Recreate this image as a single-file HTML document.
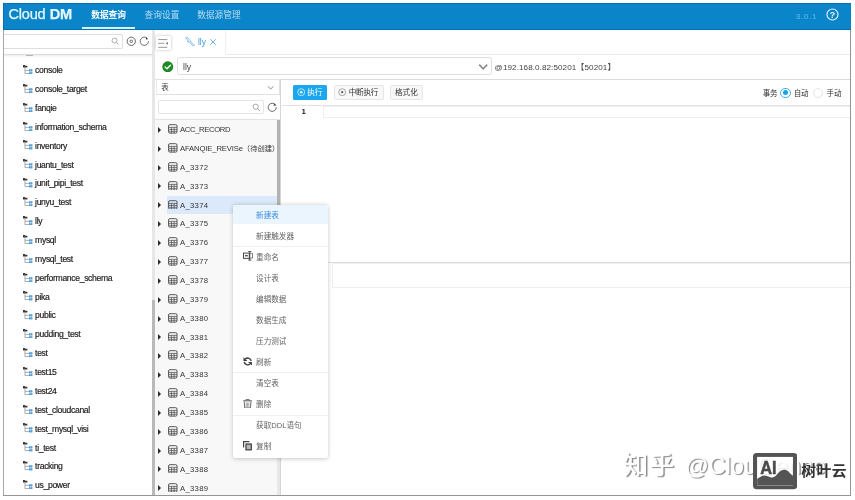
<!DOCTYPE html>
<html lang="zh-CN">
<head>
<meta charset="utf-8">
<title>Cloud DM</title>
<style>
*{box-sizing:border-box;margin:0;padding:0}
html,body{width:855px;height:500px;overflow:hidden;background:#fff}
body{font-family:"Liberation Sans","Noto Sans CJK SC",sans-serif;color:#333;font-size:9px;position:relative}
.abs{position:absolute}
#frame{position:absolute;left:3px;top:2px;width:848px;height:494px;background:#fff;overflow:hidden;will-change:transform}
.fb{position:absolute;background:#959595}
#hdr{position:absolute;left:0.200px;top:0.700px;width:847.800px;height:27.100px;background:#0b85c9;box-shadow:inset 1px 1px 0 rgba(0,40,80,.25),inset 0 -1px 0 rgba(0,40,80,.22)}
#logo{position:absolute;left:5.400px;top:3.600px;color:#e4f8ff;-webkit-text-stroke:0.250px #e4f8ff;font-size:14.6px;line-height:16px;letter-spacing:-0.25px;white-space:nowrap}
#logo b{font-weight:bold;margin-left:4.2px;letter-spacing:-0.3px}
.nav{position:absolute;top:5.900px;color:#b9def4;font-size:8.7px;line-height:12px;white-space:nowrap}
.nav.on{color:#fff;font-weight:bold}
#navline{position:absolute;left:78.800px;top:24.600px;width:53px;height:2.200px;background:#d9f1fb}
#ver{position:absolute;left:792.800px;top:9.500px;color:#4ab3ee;-webkit-text-stroke:0.200px #4ab3ee;font-size:7.800px;letter-spacing:0.800px;line-height:10px}
#help{position:absolute;left:822.800px;top:4.900px;width:13px;height:13px}
/* left panel */
#lsearch{position:absolute;left:-2px;top:32.2px;width:122px;height:14.8px;border:1px solid #dcdee2;border-radius:2px;background:#fff}
#lshadow{position:absolute;left:0;top:51.6px;width:149px;height:1px;background:#dcdcdc;box-shadow:0 1px 2px rgba(0,0,0,.12)}
.dbrow{position:absolute;left:0;height:18px;line-height:18px;width:149px;white-space:nowrap;font-size:8.600px;letter-spacing:-0.330px;color:#222;-webkit-text-stroke:0.180px #222}
.dbrow .dbi{position:absolute;left:20.400px;top:3.400px}
.dbrow span{position:absolute;left:32.100px;top:-0.400px}
#ldiv{position:absolute;left:149px;top:27.600px;width:3.400px;height:470px;background:#e7e7e7}
#lthumb{position:absolute;left:149px;top:298px;width:3.400px;height:200px;background:#b9b9b9}
/* tabs */
#tabsline{position:absolute;left:223px;top:51.800px;width:700px;height:1px;background:#ebebeb}
#toggle{position:absolute;left:153.4px;top:34px;width:14.6px;height:14.2px;background:#fff;box-shadow:0 0 3px rgba(0,0,0,.28);border-radius:1px}
#tab{position:absolute;left:172px;top:27.600px;width:51px;height:24.400px;border-right:1px solid #eee;background:#fff}
#tab span{position:absolute;left:23px;top:6.6px;font-size:8.4px;line-height:12px;color:#3d9bdc}
/* row2 */
#ok{position:absolute;left:159.400px;top:58.800px;width:11.500px;height:11.500px}
#sel{position:absolute;left:174.400px;top:55.300px;width:314.600px;height:17.900px;border:1px solid #dcdee2;border-radius:2.5px;background:#fff}
#sel span{position:absolute;left:4.600px;top:2.500px;font-size:8.6px;line-height:12px;color:#444}
#host{position:absolute;left:491.600px;top:59.500px;font-size:8.100px;line-height:12px;color:#444;white-space:nowrap;letter-spacing:0.08px}
#row2line{position:absolute;left:152px;top:76.8px;width:700px;height:1px;background:#dcdcdc}
/* table panel */
#tsel{position:absolute;left:152.600px;top:77.300px;width:124.800px;height:15.300px;border:1px solid #e2e2e2;border-left-color:#ececec;background:#fff}
#tsel span{position:absolute;left:4.600px;top:1.900px;font-size:7.500px;line-height:12px;color:#444}
#tsearch{position:absolute;left:154.900px;top:97.500px;width:106px;height:14.800px;border:1px solid #e4e5e8;border-radius:2px;background:#fff}
#tline{position:absolute;left:152px;top:117px;width:125px;height:1px;background:#e2e2e2}
.tbrow{position:absolute;left:152px;width:122px;height:18.8px;line-height:18.8px;white-space:nowrap;font-size:7.700px;letter-spacing:.300px;color:#333}
.tbrow.sel{background:#dbe9fb;left:164px;width:110px}
.tbrow.sel .arr{left:-8.8px}.tbrow.sel .tbi{left:1.2px}.tbrow.sel span{left:13px}
.tbrow .arr{position:absolute;left:3.2px;top:6.700px;width:0;height:0;border-left:3.800px solid #2a2a2a;border-top:3.100px solid transparent;border-bottom:3.100px solid transparent}
.tbrow .tbi{position:absolute;left:13.200px;top:3.900px}
.tbrow span{position:absolute;left:25px;top:0.900px}
.tbrow em{font-style:normal;font-size:7.300px;letter-spacing:0}
#tdiv{position:absolute;left:273.6px;top:117px;width:3.4px;height:380px;background:#e8e8e8}
#tthumb{position:absolute;left:274.200px;top:117.800px;width:3px;height:190px;background:#b2b2b2}
#tdiv2{position:absolute;left:277.200px;top:77.800px;width:1px;height:420px;background:#d6d6d6}
/* editor */
#run{position:absolute;left:289.500px;top:83px;width:34.600px;height:14.500px;background:#1ba7ef;border-radius:1.500px;color:#fff;font-size:7.600px;line-height:14.500px}
.btn{position:absolute;top:83px;height:14.500px;border:1px solid #e6e6e8;border-radius:1.5px;background:#f8f8f9;color:#333;font-size:7.600px;line-height:12.700px;white-space:nowrap}
#edline{position:absolute;left:278.6px;top:103px;width:572px;height:1px;background:#e2e2e2}
#gutter{position:absolute;left:278.6px;top:104px;width:41px;height:157px;background:#fff}
#ln{position:absolute;left:296.600px;top:104.200px;width:8px;text-align:center;font-weight:bold;font-size:7.800px;line-height:12px;color:#222}
#actline{position:absolute;left:319.800px;top:103.600px;width:532px;height:12.800px;border:1px solid #efefef}
#split{position:absolute;left:278.600px;top:259.600px;width:572px;height:1.200px;background:#dedede}
#resbox{position:absolute;left:329px;top:260.600px;width:523px;height:25px;border:1px solid #efefef}
.rad{position:absolute;top:85.600px;width:10.400px;height:10.400px;border-radius:50%;border:1px solid #e4e5e8;background:#fff}
.rad.on{border-color:#45b2ef}
.rad.on::after{content:"";position:absolute;left:1.500px;top:1.500px;width:5.400px;height:5.400px;border-radius:50%;background:#1ba3e8}
.rtxt{position:absolute;top:85.600px;font-size:7.500px;line-height:12px;color:#333;white-space:nowrap;letter-spacing:-0.2px}
/* menu */
#menu{position:absolute;left:229.900px;top:202.600px;width:95px;height:253.400px;background:#fff;border-radius:2.5px;box-shadow:0 0.5px 4px rgba(0,0,0,.22)}
#menu .it{position:absolute;left:0;width:95px;height:20.600px;line-height:20.600px;font-size:7.600px;color:#636363;padding-left:23.200px;white-space:nowrap}
#menu .it.hl{color:#3a8ee0}
#menu .hlbg{position:absolute;left:0;top:0;width:95px;height:19.800px;background:#ebf5fe;border-radius:2.500px 2.500px 0 0}
#menu .dv{position:absolute;left:0;width:95px;height:1px;background:#f0f0f0}
#menu svg{position:absolute}
/* watermark */
#wm{position:absolute;left:620.600px;top:448.600px;font-size:24.600px;font-weight:500;letter-spacing:1.400px;line-height:30px;color:#fff;white-space:nowrap;text-shadow:1.400px 1.400px 0.900px rgba(0,0,0,.46)}
#wm i{font-style:normal;font-weight:400;font-size:23.200px;letter-spacing:0.100px;margin-left:9.600px}
#ai{position:absolute;left:750px;top:451.400px;width:44.400px;height:36.200px}
#syy{position:absolute;left:798.200px;top:458.400px;font-size:14.800px;line-height:22px;color:#333;font-weight:bold;white-space:nowrap;letter-spacing:0.500px}
</style>
</head>
<body>
<div id="frame">
  <div id="hdr">
    <div id="logo">Cloud<b>DM</b></div>
    <div class="nav on" style="left:88px">数据查询</div>
    <div class="nav" style="left:141.4px">查询设置</div>
    <div class="nav" style="left:194px">数据源管理</div>
    <div id="navline"></div>
    <div id="ver">3.0.1</div>
    <svg id="help" viewBox="0 0 25 25"><circle cx="12.5" cy="12.5" r="10.6" fill="none" stroke="#eaf6fd" stroke-width="2.2"/><text x="12.5" y="18.4" text-anchor="middle" font-family="Liberation Sans, sans-serif" font-weight="bold" font-size="17" fill="#eaf6fd">?</text></svg>
  </div>

  <!-- left panel -->
  <div id="lsearch"></div>
  <svg class="abs" style="left:108.2px;top:35.2px" width="8.6" height="8.6" viewBox="0 0 18 18"><circle cx="7.4" cy="7.4" r="5.2" fill="none" stroke="#8d8d8d" stroke-width="1.5"/><path d="M11.4 11.4l4.6 4.6" stroke="#8d8d8d" stroke-width="1.6"/></svg>
  <svg class="abs" style="left:122.8px;top:34.3px" width="10.6" height="10.6" viewBox="0 0 22 22"><circle cx="11" cy="11" r="8.6" fill="none" stroke="#3a3a3a" stroke-width="1.6"/><circle cx="11" cy="11" r="2.6" fill="none" stroke="#3a3a3a" stroke-width="1.5"/></svg>
  <svg class="abs" style="left:136.200px;top:34.300px" width="10.600" height="10.600" viewBox="0 0 22 22"><path d="M17.600 5.400A8.600 8.600 0 1 0 19.600 11" fill="none" stroke="#3a3a3a" stroke-width="1.500"/><path d="M15 2.600l3.600 4-4.600 0.800z" fill="#3a3a3a"/></svg>
  <div id="lshadow"></div>
  <div class="abs" style="left:22.600px;top:52.500px;width:7.400px;height:1.300px;background:#777;opacity:.500"></div>
<div class="dbrow" style="top:59.60px"><svg class="dbi" viewBox="0 0 18 18" width="9.400" height="9.400"><path d="M0 0h3.400l1 1.200h4v3.800H0z" fill="#3a3a3a"/><path d="M3.800 5v11.400h8M3.800 10.200h8" fill="none" stroke="#7d8790" stroke-width="1.300"/><rect x="11.600" y="8.200" width="6.400" height="4.200" fill="#3f8fd0"/><rect x="11.600" y="13.800" width="6.400" height="4.200" fill="#3f8fd0"/><path d="M14.800 8.200v4.200M14.800 13.800v4.200" stroke="#d6e9f8" stroke-width="0.900"/></svg><span>console</span></div>
<div class="dbrow" style="top:78.46px"><svg class="dbi" viewBox="0 0 18 18" width="9.400" height="9.400"><path d="M0 0h3.400l1 1.200h4v3.800H0z" fill="#3a3a3a"/><path d="M3.800 5v11.400h8M3.800 10.200h8" fill="none" stroke="#7d8790" stroke-width="1.300"/><rect x="11.600" y="8.200" width="6.400" height="4.200" fill="#3f8fd0"/><rect x="11.600" y="13.800" width="6.400" height="4.200" fill="#3f8fd0"/><path d="M14.800 8.200v4.200M14.800 13.800v4.200" stroke="#d6e9f8" stroke-width="0.900"/></svg><span>console_target</span></div>
<div class="dbrow" style="top:97.33px"><svg class="dbi" viewBox="0 0 18 18" width="9.400" height="9.400"><path d="M0 0h3.400l1 1.200h4v3.800H0z" fill="#3a3a3a"/><path d="M3.800 5v11.400h8M3.800 10.200h8" fill="none" stroke="#7d8790" stroke-width="1.300"/><rect x="11.600" y="8.200" width="6.400" height="4.200" fill="#3f8fd0"/><rect x="11.600" y="13.800" width="6.400" height="4.200" fill="#3f8fd0"/><path d="M14.800 8.200v4.200M14.800 13.800v4.200" stroke="#d6e9f8" stroke-width="0.900"/></svg><span>fanqie</span></div>
<div class="dbrow" style="top:116.19px"><svg class="dbi" viewBox="0 0 18 18" width="9.400" height="9.400"><path d="M0 0h3.400l1 1.200h4v3.800H0z" fill="#3a3a3a"/><path d="M3.800 5v11.400h8M3.800 10.200h8" fill="none" stroke="#7d8790" stroke-width="1.300"/><rect x="11.600" y="8.200" width="6.400" height="4.200" fill="#3f8fd0"/><rect x="11.600" y="13.800" width="6.400" height="4.200" fill="#3f8fd0"/><path d="M14.800 8.200v4.200M14.800 13.800v4.200" stroke="#d6e9f8" stroke-width="0.900"/></svg><span>information_schema</span></div>
<div class="dbrow" style="top:135.06px"><svg class="dbi" viewBox="0 0 18 18" width="9.400" height="9.400"><path d="M0 0h3.400l1 1.200h4v3.800H0z" fill="#3a3a3a"/><path d="M3.800 5v11.400h8M3.800 10.200h8" fill="none" stroke="#7d8790" stroke-width="1.300"/><rect x="11.600" y="8.200" width="6.400" height="4.200" fill="#3f8fd0"/><rect x="11.600" y="13.800" width="6.400" height="4.200" fill="#3f8fd0"/><path d="M14.800 8.200v4.200M14.800 13.800v4.200" stroke="#d6e9f8" stroke-width="0.900"/></svg><span>inventory</span></div>
<div class="dbrow" style="top:153.92px"><svg class="dbi" viewBox="0 0 18 18" width="9.400" height="9.400"><path d="M0 0h3.400l1 1.200h4v3.800H0z" fill="#3a3a3a"/><path d="M3.800 5v11.400h8M3.800 10.200h8" fill="none" stroke="#7d8790" stroke-width="1.300"/><rect x="11.600" y="8.200" width="6.400" height="4.200" fill="#3f8fd0"/><rect x="11.600" y="13.800" width="6.400" height="4.200" fill="#3f8fd0"/><path d="M14.800 8.200v4.200M14.800 13.800v4.200" stroke="#d6e9f8" stroke-width="0.900"/></svg><span>juantu_test</span></div>
<div class="dbrow" style="top:172.79px"><svg class="dbi" viewBox="0 0 18 18" width="9.400" height="9.400"><path d="M0 0h3.400l1 1.200h4v3.800H0z" fill="#3a3a3a"/><path d="M3.800 5v11.400h8M3.800 10.200h8" fill="none" stroke="#7d8790" stroke-width="1.300"/><rect x="11.600" y="8.200" width="6.400" height="4.200" fill="#3f8fd0"/><rect x="11.600" y="13.800" width="6.400" height="4.200" fill="#3f8fd0"/><path d="M14.800 8.200v4.200M14.800 13.800v4.200" stroke="#d6e9f8" stroke-width="0.900"/></svg><span>junit_pipi_test</span></div>
<div class="dbrow" style="top:191.65px"><svg class="dbi" viewBox="0 0 18 18" width="9.400" height="9.400"><path d="M0 0h3.400l1 1.200h4v3.800H0z" fill="#3a3a3a"/><path d="M3.800 5v11.400h8M3.800 10.200h8" fill="none" stroke="#7d8790" stroke-width="1.300"/><rect x="11.600" y="8.200" width="6.400" height="4.200" fill="#3f8fd0"/><rect x="11.600" y="13.800" width="6.400" height="4.200" fill="#3f8fd0"/><path d="M14.800 8.200v4.200M14.800 13.800v4.200" stroke="#d6e9f8" stroke-width="0.900"/></svg><span>junyu_test</span></div>
<div class="dbrow" style="top:210.52px"><svg class="dbi" viewBox="0 0 18 18" width="9.400" height="9.400"><path d="M0 0h3.400l1 1.200h4v3.800H0z" fill="#3a3a3a"/><path d="M3.800 5v11.400h8M3.800 10.200h8" fill="none" stroke="#7d8790" stroke-width="1.300"/><rect x="11.600" y="8.200" width="6.400" height="4.200" fill="#3f8fd0"/><rect x="11.600" y="13.800" width="6.400" height="4.200" fill="#3f8fd0"/><path d="M14.800 8.200v4.200M14.800 13.800v4.200" stroke="#d6e9f8" stroke-width="0.900"/></svg><span>lly</span></div>
<div class="dbrow" style="top:229.38px"><svg class="dbi" viewBox="0 0 18 18" width="9.400" height="9.400"><path d="M0 0h3.400l1 1.200h4v3.800H0z" fill="#3a3a3a"/><path d="M3.800 5v11.400h8M3.800 10.200h8" fill="none" stroke="#7d8790" stroke-width="1.300"/><rect x="11.600" y="8.200" width="6.400" height="4.200" fill="#3f8fd0"/><rect x="11.600" y="13.800" width="6.400" height="4.200" fill="#3f8fd0"/><path d="M14.800 8.200v4.200M14.800 13.800v4.200" stroke="#d6e9f8" stroke-width="0.900"/></svg><span>mysql</span></div>
<div class="dbrow" style="top:248.25px"><svg class="dbi" viewBox="0 0 18 18" width="9.400" height="9.400"><path d="M0 0h3.400l1 1.200h4v3.800H0z" fill="#3a3a3a"/><path d="M3.800 5v11.400h8M3.800 10.200h8" fill="none" stroke="#7d8790" stroke-width="1.300"/><rect x="11.600" y="8.200" width="6.400" height="4.200" fill="#3f8fd0"/><rect x="11.600" y="13.800" width="6.400" height="4.200" fill="#3f8fd0"/><path d="M14.800 8.200v4.200M14.800 13.800v4.200" stroke="#d6e9f8" stroke-width="0.900"/></svg><span>mysql_test</span></div>
<div class="dbrow" style="top:267.12px"><svg class="dbi" viewBox="0 0 18 18" width="9.400" height="9.400"><path d="M0 0h3.400l1 1.200h4v3.800H0z" fill="#3a3a3a"/><path d="M3.800 5v11.400h8M3.800 10.200h8" fill="none" stroke="#7d8790" stroke-width="1.300"/><rect x="11.600" y="8.200" width="6.400" height="4.200" fill="#3f8fd0"/><rect x="11.600" y="13.800" width="6.400" height="4.200" fill="#3f8fd0"/><path d="M14.800 8.200v4.200M14.800 13.800v4.200" stroke="#d6e9f8" stroke-width="0.900"/></svg><span>performance_schema</span></div>
<div class="dbrow" style="top:285.98px"><svg class="dbi" viewBox="0 0 18 18" width="9.400" height="9.400"><path d="M0 0h3.400l1 1.200h4v3.800H0z" fill="#3a3a3a"/><path d="M3.800 5v11.400h8M3.800 10.200h8" fill="none" stroke="#7d8790" stroke-width="1.300"/><rect x="11.600" y="8.200" width="6.400" height="4.200" fill="#3f8fd0"/><rect x="11.600" y="13.800" width="6.400" height="4.200" fill="#3f8fd0"/><path d="M14.800 8.200v4.200M14.800 13.800v4.200" stroke="#d6e9f8" stroke-width="0.900"/></svg><span>pika</span></div>
<div class="dbrow" style="top:304.84px"><svg class="dbi" viewBox="0 0 18 18" width="9.400" height="9.400"><path d="M0 0h3.400l1 1.200h4v3.800H0z" fill="#3a3a3a"/><path d="M3.800 5v11.400h8M3.800 10.200h8" fill="none" stroke="#7d8790" stroke-width="1.300"/><rect x="11.600" y="8.200" width="6.400" height="4.200" fill="#3f8fd0"/><rect x="11.600" y="13.800" width="6.400" height="4.200" fill="#3f8fd0"/><path d="M14.800 8.200v4.200M14.800 13.800v4.200" stroke="#d6e9f8" stroke-width="0.900"/></svg><span>public</span></div>
<div class="dbrow" style="top:323.71px"><svg class="dbi" viewBox="0 0 18 18" width="9.400" height="9.400"><path d="M0 0h3.400l1 1.200h4v3.800H0z" fill="#3a3a3a"/><path d="M3.800 5v11.400h8M3.800 10.200h8" fill="none" stroke="#7d8790" stroke-width="1.300"/><rect x="11.600" y="8.200" width="6.400" height="4.200" fill="#3f8fd0"/><rect x="11.600" y="13.800" width="6.400" height="4.200" fill="#3f8fd0"/><path d="M14.800 8.200v4.200M14.800 13.800v4.200" stroke="#d6e9f8" stroke-width="0.900"/></svg><span>pudding_test</span></div>
<div class="dbrow" style="top:342.57px"><svg class="dbi" viewBox="0 0 18 18" width="9.400" height="9.400"><path d="M0 0h3.400l1 1.200h4v3.800H0z" fill="#3a3a3a"/><path d="M3.800 5v11.400h8M3.800 10.200h8" fill="none" stroke="#7d8790" stroke-width="1.300"/><rect x="11.600" y="8.200" width="6.400" height="4.200" fill="#3f8fd0"/><rect x="11.600" y="13.800" width="6.400" height="4.200" fill="#3f8fd0"/><path d="M14.800 8.200v4.200M14.800 13.800v4.200" stroke="#d6e9f8" stroke-width="0.900"/></svg><span>test</span></div>
<div class="dbrow" style="top:361.44px"><svg class="dbi" viewBox="0 0 18 18" width="9.400" height="9.400"><path d="M0 0h3.400l1 1.200h4v3.800H0z" fill="#3a3a3a"/><path d="M3.800 5v11.400h8M3.800 10.200h8" fill="none" stroke="#7d8790" stroke-width="1.300"/><rect x="11.600" y="8.200" width="6.400" height="4.200" fill="#3f8fd0"/><rect x="11.600" y="13.800" width="6.400" height="4.200" fill="#3f8fd0"/><path d="M14.800 8.200v4.200M14.800 13.800v4.200" stroke="#d6e9f8" stroke-width="0.900"/></svg><span>test15</span></div>
<div class="dbrow" style="top:380.30px"><svg class="dbi" viewBox="0 0 18 18" width="9.400" height="9.400"><path d="M0 0h3.400l1 1.200h4v3.800H0z" fill="#3a3a3a"/><path d="M3.800 5v11.400h8M3.800 10.200h8" fill="none" stroke="#7d8790" stroke-width="1.300"/><rect x="11.600" y="8.200" width="6.400" height="4.200" fill="#3f8fd0"/><rect x="11.600" y="13.800" width="6.400" height="4.200" fill="#3f8fd0"/><path d="M14.800 8.200v4.200M14.800 13.800v4.200" stroke="#d6e9f8" stroke-width="0.900"/></svg><span>test24</span></div>
<div class="dbrow" style="top:399.17px"><svg class="dbi" viewBox="0 0 18 18" width="9.400" height="9.400"><path d="M0 0h3.400l1 1.200h4v3.800H0z" fill="#3a3a3a"/><path d="M3.800 5v11.400h8M3.800 10.200h8" fill="none" stroke="#7d8790" stroke-width="1.300"/><rect x="11.600" y="8.200" width="6.400" height="4.200" fill="#3f8fd0"/><rect x="11.600" y="13.800" width="6.400" height="4.200" fill="#3f8fd0"/><path d="M14.800 8.200v4.200M14.800 13.800v4.200" stroke="#d6e9f8" stroke-width="0.900"/></svg><span>test_cloudcanal</span></div>
<div class="dbrow" style="top:418.03px"><svg class="dbi" viewBox="0 0 18 18" width="9.400" height="9.400"><path d="M0 0h3.400l1 1.200h4v3.800H0z" fill="#3a3a3a"/><path d="M3.800 5v11.400h8M3.800 10.200h8" fill="none" stroke="#7d8790" stroke-width="1.300"/><rect x="11.600" y="8.200" width="6.400" height="4.200" fill="#3f8fd0"/><rect x="11.600" y="13.800" width="6.400" height="4.200" fill="#3f8fd0"/><path d="M14.800 8.200v4.200M14.800 13.800v4.200" stroke="#d6e9f8" stroke-width="0.900"/></svg><span>test_mysql_visi</span></div>
<div class="dbrow" style="top:436.90px"><svg class="dbi" viewBox="0 0 18 18" width="9.400" height="9.400"><path d="M0 0h3.400l1 1.200h4v3.800H0z" fill="#3a3a3a"/><path d="M3.800 5v11.400h8M3.800 10.200h8" fill="none" stroke="#7d8790" stroke-width="1.300"/><rect x="11.600" y="8.200" width="6.400" height="4.200" fill="#3f8fd0"/><rect x="11.600" y="13.800" width="6.400" height="4.200" fill="#3f8fd0"/><path d="M14.800 8.200v4.200M14.800 13.800v4.200" stroke="#d6e9f8" stroke-width="0.900"/></svg><span>ti_test</span></div>
<div class="dbrow" style="top:455.76px"><svg class="dbi" viewBox="0 0 18 18" width="9.400" height="9.400"><path d="M0 0h3.400l1 1.200h4v3.800H0z" fill="#3a3a3a"/><path d="M3.800 5v11.400h8M3.800 10.200h8" fill="none" stroke="#7d8790" stroke-width="1.300"/><rect x="11.600" y="8.200" width="6.400" height="4.200" fill="#3f8fd0"/><rect x="11.600" y="13.800" width="6.400" height="4.200" fill="#3f8fd0"/><path d="M14.800 8.200v4.200M14.800 13.800v4.200" stroke="#d6e9f8" stroke-width="0.900"/></svg><span>tracking</span></div>
<div class="dbrow" style="top:474.63px"><svg class="dbi" viewBox="0 0 18 18" width="9.400" height="9.400"><path d="M0 0h3.400l1 1.200h4v3.800H0z" fill="#3a3a3a"/><path d="M3.800 5v11.400h8M3.800 10.200h8" fill="none" stroke="#7d8790" stroke-width="1.300"/><rect x="11.600" y="8.200" width="6.400" height="4.200" fill="#3f8fd0"/><rect x="11.600" y="13.800" width="6.400" height="4.200" fill="#3f8fd0"/><path d="M14.800 8.200v4.200M14.800 13.800v4.200" stroke="#d6e9f8" stroke-width="0.900"/></svg><span>us_power</span></div>
  <div id="ldiv"></div><div id="lthumb"></div>

  <!-- tabs -->
  <div id="tabsline"></div>
  <div id="toggle"><svg width="14.600" height="14.200" viewBox="0 0 29 28"><path d="M4.400 7h18M4.400 14.400h12.400M4.400 22.400h18" stroke="#777" stroke-width="1.500"/><path d="M23.400 11.600v5.600l-3.800-2.800z" fill="#555"/></svg></div>
  <div id="tab">
    <svg class="abs" style="left:8.800px;top:6.400px" width="12" height="12" viewBox="0 0 22 22"><path d="M2.5 3.2c3.4-0.8 6.2 0.6 8.2 3.6 1.8 2.8 2.6 5.4 5 7.4 1.2 1 2.4 1.6 3.4 2.8-1.6-0.2-2.8 0-3.6 0.8-0.6-2-2-3.2-3.6-4.4C9.4 11.600 8.400 9.400 7 7.600 5.800 6 4.400 5 2.500 3.200z" fill="none" stroke="#4aa0dd" stroke-width="1.2" stroke-linejoin="round"/><path d="M6.400 8.200l1.800 4.600" stroke="#4aa0dd" stroke-width="1.1" fill="none"/></svg>
    <span>lly</span>
    <svg class="abs" style="left:34px;top:8.200px" width="8" height="8" viewBox="0 0 16 16"><path d="M2.500 2.500l11 11M13.500 2.500l-11 11" stroke="#3d9bdc" stroke-width="1.500"/></svg>
  </div>

  <!-- row 2 -->
  <svg id="ok" viewBox="0 0 22 22"><circle cx="11" cy="11" r="10.400" fill="#1f7a1f"/><circle cx="11" cy="11" r="9" fill="#1b8f22"/><path d="M6 11.400l3.600 3.600 6.600-7" fill="none" stroke="#fff" stroke-width="2.600" stroke-linecap="round" stroke-linejoin="round"/></svg>
  <div id="sel"><span>lly</span>
    <svg class="abs" style="left:299.600px;top:4.700px" width="10.400" height="7.600" viewBox="0 0 22 16"><path d="M2.500 3.500l8.500 9 8.500-9" fill="none" stroke="#8a8a8a" stroke-width="3.400"/></svg>
  </div>
  <div id="host">@192.168.0.82:50201【50201】</div>
  <div id="row2line"></div>

  <!-- table panel -->
  <div class="abs" style="left:152.400px;top:117px;width:121.400px;height:377px;background:#f8f8f8"></div>
  <div id="tsel"><span>表</span>
    <svg class="abs" style="left:110.200px;top:5.200px" width="7.200" height="5.400" viewBox="0 0 16 12"><path d="M2 3l6 6 6-6" fill="none" stroke="#777" stroke-width="2"/></svg>
  </div>
  <div id="tsearch"></div>
  <svg class="abs" style="left:248.600px;top:100.600px" width="9" height="9" viewBox="0 0 18 18"><circle cx="7.400" cy="7.400" r="5.200" fill="none" stroke="#8d8d8d" stroke-width="1.500"/><path d="M11.400 11.400l4.600 4.600" stroke="#8d8d8d" stroke-width="1.600"/></svg>
  <svg class="abs" style="left:264.400px;top:99.600px" width="10.400" height="10.400" viewBox="0 0 22 22"><path d="M18.600 7.200A8.600 8.600 0 1 0 19.600 11" fill="none" stroke="#444" stroke-width="1.700"/><path d="M15.400 2.800l3.800 4.800-5.400 0.600z" fill="#444"/></svg>
  <div id="tline"></div>
<div class="tbrow" style="top:118.20px"><i class="arr"></i><svg class="tbi" viewBox="0 0 20 20" width="9.600" height="9.800"><rect x="1.200" y="1.200" width="17.600" height="17.600" rx="2.800" fill="none" stroke="#484848" stroke-width="1.900"/><path d="M1.200 6.800h17.600M1.200 11h17.600M1.200 15h17.600M7.200 6.800v12M12.800 6.800v12" stroke="#484848" stroke-width="1.500" fill="none"/></svg><span style="letter-spacing:-0.36px">ACC_RECORD</span></div>
<div class="tbrow" style="top:137.06px"><i class="arr"></i><svg class="tbi" viewBox="0 0 20 20" width="9.600" height="9.800"><rect x="1.200" y="1.200" width="17.600" height="17.600" rx="2.800" fill="none" stroke="#484848" stroke-width="1.900"/><path d="M1.200 6.800h17.600M1.200 11h17.600M1.200 15h17.600M7.200 6.800v12M12.800 6.800v12" stroke="#484848" stroke-width="1.500" fill="none"/></svg><span style="letter-spacing:-0.15px">AFANQIE_REVISe<em>（待创建）</em></span></div>
<div class="tbrow" style="top:155.93px"><i class="arr"></i><svg class="tbi" viewBox="0 0 20 20" width="9.600" height="9.800"><rect x="1.200" y="1.200" width="17.600" height="17.600" rx="2.800" fill="none" stroke="#484848" stroke-width="1.900"/><path d="M1.200 6.800h17.600M1.200 11h17.600M1.200 15h17.600M7.200 6.800v12M12.800 6.800v12" stroke="#484848" stroke-width="1.500" fill="none"/></svg><span>A_3372</span></div>
<div class="tbrow" style="top:174.79px"><i class="arr"></i><svg class="tbi" viewBox="0 0 20 20" width="9.600" height="9.800"><rect x="1.200" y="1.200" width="17.600" height="17.600" rx="2.800" fill="none" stroke="#484848" stroke-width="1.900"/><path d="M1.200 6.800h17.600M1.200 11h17.600M1.200 15h17.600M7.200 6.800v12M12.800 6.800v12" stroke="#484848" stroke-width="1.500" fill="none"/></svg><span>A_3373</span></div>
<div class="tbrow sel" style="top:193.66px"><i class="arr"></i><svg class="tbi" viewBox="0 0 20 20" width="9.600" height="9.800"><rect x="1.200" y="1.200" width="17.600" height="17.600" rx="2.800" fill="none" stroke="#484848" stroke-width="1.900"/><path d="M1.200 6.800h17.600M1.200 11h17.600M1.200 15h17.600M7.200 6.800v12M12.800 6.800v12" stroke="#484848" stroke-width="1.500" fill="none"/></svg><span>A_3374</span></div>
<div class="tbrow" style="top:212.52px"><i class="arr"></i><svg class="tbi" viewBox="0 0 20 20" width="9.600" height="9.800"><rect x="1.200" y="1.200" width="17.600" height="17.600" rx="2.800" fill="none" stroke="#484848" stroke-width="1.900"/><path d="M1.200 6.800h17.600M1.200 11h17.600M1.200 15h17.600M7.200 6.800v12M12.800 6.800v12" stroke="#484848" stroke-width="1.500" fill="none"/></svg><span>A_3375</span></div>
<div class="tbrow" style="top:231.39px"><i class="arr"></i><svg class="tbi" viewBox="0 0 20 20" width="9.600" height="9.800"><rect x="1.200" y="1.200" width="17.600" height="17.600" rx="2.800" fill="none" stroke="#484848" stroke-width="1.900"/><path d="M1.200 6.800h17.600M1.200 11h17.600M1.200 15h17.600M7.200 6.800v12M12.800 6.800v12" stroke="#484848" stroke-width="1.500" fill="none"/></svg><span>A_3376</span></div>
<div class="tbrow" style="top:250.25px"><i class="arr"></i><svg class="tbi" viewBox="0 0 20 20" width="9.600" height="9.800"><rect x="1.200" y="1.200" width="17.600" height="17.600" rx="2.800" fill="none" stroke="#484848" stroke-width="1.900"/><path d="M1.200 6.800h17.600M1.200 11h17.600M1.200 15h17.600M7.200 6.800v12M12.800 6.800v12" stroke="#484848" stroke-width="1.500" fill="none"/></svg><span>A_3377</span></div>
<div class="tbrow" style="top:269.12px"><i class="arr"></i><svg class="tbi" viewBox="0 0 20 20" width="9.600" height="9.800"><rect x="1.200" y="1.200" width="17.600" height="17.600" rx="2.800" fill="none" stroke="#484848" stroke-width="1.900"/><path d="M1.200 6.800h17.600M1.200 11h17.600M1.200 15h17.600M7.200 6.800v12M12.800 6.800v12" stroke="#484848" stroke-width="1.500" fill="none"/></svg><span>A_3378</span></div>
<div class="tbrow" style="top:287.99px"><i class="arr"></i><svg class="tbi" viewBox="0 0 20 20" width="9.600" height="9.800"><rect x="1.200" y="1.200" width="17.600" height="17.600" rx="2.800" fill="none" stroke="#484848" stroke-width="1.900"/><path d="M1.200 6.800h17.600M1.200 11h17.600M1.200 15h17.600M7.200 6.800v12M12.800 6.800v12" stroke="#484848" stroke-width="1.500" fill="none"/></svg><span>A_3379</span></div>
<div class="tbrow" style="top:306.85px"><i class="arr"></i><svg class="tbi" viewBox="0 0 20 20" width="9.600" height="9.800"><rect x="1.200" y="1.200" width="17.600" height="17.600" rx="2.800" fill="none" stroke="#484848" stroke-width="1.900"/><path d="M1.200 6.800h17.600M1.200 11h17.600M1.200 15h17.600M7.200 6.800v12M12.800 6.800v12" stroke="#484848" stroke-width="1.500" fill="none"/></svg><span>A_3380</span></div>
<div class="tbrow" style="top:325.72px"><i class="arr"></i><svg class="tbi" viewBox="0 0 20 20" width="9.600" height="9.800"><rect x="1.200" y="1.200" width="17.600" height="17.600" rx="2.800" fill="none" stroke="#484848" stroke-width="1.900"/><path d="M1.200 6.800h17.600M1.200 11h17.600M1.200 15h17.600M7.200 6.800v12M12.800 6.800v12" stroke="#484848" stroke-width="1.500" fill="none"/></svg><span>A_3381</span></div>
<div class="tbrow" style="top:344.58px"><i class="arr"></i><svg class="tbi" viewBox="0 0 20 20" width="9.600" height="9.800"><rect x="1.200" y="1.200" width="17.600" height="17.600" rx="2.800" fill="none" stroke="#484848" stroke-width="1.900"/><path d="M1.200 6.800h17.600M1.200 11h17.600M1.200 15h17.600M7.200 6.800v12M12.800 6.800v12" stroke="#484848" stroke-width="1.500" fill="none"/></svg><span>A_3382</span></div>
<div class="tbrow" style="top:363.44px"><i class="arr"></i><svg class="tbi" viewBox="0 0 20 20" width="9.600" height="9.800"><rect x="1.200" y="1.200" width="17.600" height="17.600" rx="2.800" fill="none" stroke="#484848" stroke-width="1.900"/><path d="M1.200 6.800h17.600M1.200 11h17.600M1.200 15h17.600M7.200 6.800v12M12.800 6.800v12" stroke="#484848" stroke-width="1.500" fill="none"/></svg><span>A_3383</span></div>
<div class="tbrow" style="top:382.31px"><i class="arr"></i><svg class="tbi" viewBox="0 0 20 20" width="9.600" height="9.800"><rect x="1.200" y="1.200" width="17.600" height="17.600" rx="2.800" fill="none" stroke="#484848" stroke-width="1.900"/><path d="M1.200 6.800h17.600M1.200 11h17.600M1.200 15h17.600M7.200 6.800v12M12.800 6.800v12" stroke="#484848" stroke-width="1.500" fill="none"/></svg><span>A_3384</span></div>
<div class="tbrow" style="top:401.17px"><i class="arr"></i><svg class="tbi" viewBox="0 0 20 20" width="9.600" height="9.800"><rect x="1.200" y="1.200" width="17.600" height="17.600" rx="2.800" fill="none" stroke="#484848" stroke-width="1.900"/><path d="M1.200 6.800h17.600M1.200 11h17.600M1.200 15h17.600M7.200 6.800v12M12.800 6.800v12" stroke="#484848" stroke-width="1.500" fill="none"/></svg><span>A_3385</span></div>
<div class="tbrow" style="top:420.04px"><i class="arr"></i><svg class="tbi" viewBox="0 0 20 20" width="9.600" height="9.800"><rect x="1.200" y="1.200" width="17.600" height="17.600" rx="2.800" fill="none" stroke="#484848" stroke-width="1.900"/><path d="M1.200 6.800h17.600M1.200 11h17.600M1.200 15h17.600M7.200 6.800v12M12.800 6.800v12" stroke="#484848" stroke-width="1.500" fill="none"/></svg><span>A_3386</span></div>
<div class="tbrow" style="top:438.90px"><i class="arr"></i><svg class="tbi" viewBox="0 0 20 20" width="9.600" height="9.800"><rect x="1.200" y="1.200" width="17.600" height="17.600" rx="2.800" fill="none" stroke="#484848" stroke-width="1.900"/><path d="M1.200 6.800h17.600M1.200 11h17.600M1.200 15h17.600M7.200 6.800v12M12.800 6.800v12" stroke="#484848" stroke-width="1.500" fill="none"/></svg><span>A_3387</span></div>
<div class="tbrow" style="top:457.77px"><i class="arr"></i><svg class="tbi" viewBox="0 0 20 20" width="9.600" height="9.800"><rect x="1.200" y="1.200" width="17.600" height="17.600" rx="2.800" fill="none" stroke="#484848" stroke-width="1.900"/><path d="M1.200 6.800h17.600M1.200 11h17.600M1.200 15h17.600M7.200 6.800v12M12.800 6.800v12" stroke="#484848" stroke-width="1.500" fill="none"/></svg><span>A_3388</span></div>
<div class="tbrow" style="top:476.63px"><i class="arr"></i><svg class="tbi" viewBox="0 0 20 20" width="9.600" height="9.800"><rect x="1.200" y="1.200" width="17.600" height="17.600" rx="2.800" fill="none" stroke="#484848" stroke-width="1.900"/><path d="M1.200 6.800h17.600M1.200 11h17.600M1.200 15h17.600M7.200 6.800v12M12.800 6.800v12" stroke="#484848" stroke-width="1.500" fill="none"/></svg><span>A_3389</span></div>
  <div id="tdiv"></div><div id="tthumb"></div><div id="tdiv2"></div>

  <!-- editor -->
  <div id="run"><svg class="abs" style="left:4.400px;top:3px" width="8.400" height="8.400" viewBox="0 0 17 17"><circle cx="8.500" cy="8.500" r="7" fill="none" stroke="#fff" stroke-width="1.400"/><circle cx="8.500" cy="8.500" r="2.600" fill="#fff"/></svg><span class="abs" style="left:14.800px;top:0.900px;letter-spacing:-0.2px">执行</span></div>
  <div class="btn" style="left:330.600px;width:50.400px"><svg class="abs" style="left:3.800px;top:2.100px" width="8.400" height="8.400" viewBox="0 0 17 17"><circle cx="8.500" cy="8.500" r="7" fill="none" stroke="#666" stroke-width="1.100"/><circle cx="8.500" cy="8.500" r="2.200" fill="#555"/></svg><span class="abs" style="left:14.200px;top:0.900px;letter-spacing:-0.25px">中断执行</span></div>
  <div class="btn" style="left:386.800px;width:33.200px"><span class="abs" style="left:4.200px;top:0.900px">格式化</span></div>
  <div class="rtxt" style="left:759.800px">事务</div>
  <div class="rad on" style="left:777.300px"></div>
  <div class="rtxt" style="left:790.800px">自动</div>
  <div class="rad" style="left:809.800px"></div>
  <div class="rtxt" style="left:823.600px">手动</div>
  <div id="edline"></div>
  <div id="actline"></div>
  <div id="ln">1</div>
  <div id="split"></div>
  <div id="resbox"></div>

  <!-- context menu -->
  <div id="menu">
    <div class="hlbg"></div>
    <div class="it hl" style="top:1.20px">新建表</div>
    <div class="it" style="top:22.24px">新建触发器</div>
    <div class="it" style="top:43.28px">重命名</div>
    <div class="it" style="top:64.32px">设计表</div>
    <div class="it" style="top:85.36px">编辑数据</div>
    <div class="it" style="top:106.40px">数据生成</div>
    <div class="it" style="top:127.44px">压力测试</div>
    <div class="it" style="top:148.48px">刷新</div>
    <div class="it" style="top:169.52px">清空表</div>
    <div class="it" style="top:190.56px">删除</div>
    <div class="it" style="top:211.60px">获取DDL语句</div>
    <div class="it" style="top:232.64px">复制</div>
    <div class="dv" style="top:41.2px"></div>
    <div class="dv" style="top:167.4px"></div>
    <div class="dv" style="top:210.2px"></div>
    <svg style="left:10.100px;top:46.900px" width="10" height="9.500" viewBox="0 0 20 19"><rect x="1" y="4.200" width="11.600" height="10.600" fill="none" stroke="#4a4a4a" stroke-width="2"/><rect x="4" y="8.300" width="5.600" height="2.400" fill="#333"/><path d="M13.600 0.800v17.400M10.400 0.800h6.400M10.400 18.200h6.400" stroke="#333" stroke-width="1.700"/><path d="M14.600 4.800h4.400v9.400h-4.400" fill="none" stroke="#555" stroke-width="1.500"/></svg>
    <svg style="left:10.100px;top:152.100px" width="9.400" height="8.900" viewBox="0 0 20 20" preserveAspectRatio="none"><g transform="translate(20,0) scale(-1,1)"><path d="M2.600 9a7.400 7.400 0 0 1 12.600-4.400" fill="none" stroke="#3c3c3c" stroke-width="3"/><path d="M19 0.600v8.400h-8.400z" fill="#3c3c3c"/><path d="M17.400 11a7.400 7.400 0 0 1-12.600 4.400" fill="none" stroke="#3c3c3c" stroke-width="3"/><path d="M1 19.400v-8.400h8.400z" fill="#3c3c3c"/></g></svg>
    <svg style="left:10.200px;top:194.100px" width="9.200" height="9.400" viewBox="0 0 18 18.500"><path d="M5.800 3V1h6.400v2" fill="none" stroke="#555" stroke-width="1.500"/><path d="M0.400 3.600h17.200" stroke="#444" stroke-width="1.800"/><path d="M2.400 5l0.900 12.500h11.400L15.600 5" fill="none" stroke="#555" stroke-width="1.700"/><path d="M6.400 7v8.500M9 7v8.500M11.600 7v8.500" stroke="#777" stroke-width="1.300"/></svg>
    <svg style="left:10.200px;top:236.500px" width="8.900" height="9.500" viewBox="0 0 18 19"><path d="M1.200 13V1.200h11.800" fill="none" stroke="#444" stroke-width="2.400"/><rect x="6" y="6" width="10.800" height="11.800" fill="#b8b8b8" stroke="#3a3a3a" stroke-width="2.400"/></svg>
  </div>

  <!-- watermark -->
  <div id="wm">知乎<i>@ClouGence</i></div>
  <div id="syy">树叶云</div>
  <svg id="ai" viewBox="0 0 44.4 36.2"><path fill-rule="evenodd" d="M3.600 0h37.200a3.600 3.600 0 0 1 3.600 3.600v29a3.600 3.600 0 0 1-3.600 3.600H3.600A3.600 3.600 0 0 1 0 32.600V3.600A3.600 3.600 0 0 1 3.600 0zM4.200 3.900v28.400h35.800V3.900z" fill="#545454"/><rect x="4.200" y="3.900" width="35.800" height="28.400" fill="#fff" fill-opacity="0.820"/><path d="M4.2 32.300V25.800c2.400-1.200 4.600-3.400 7.400-3.300 3 0.100 5 2.200 8 1.900 4.200-0.400 6-7.300 11-7.700 2.200-0.200 3.400 0.400 4.600 1.600 1.600 1.600 2.800 3.600 4.800 4.400v9.600z" fill="#545454"/><text x="7.200" y="20.700" textLength="16.400" lengthAdjust="spacingAndGlyphs" font-family="Liberation Sans, sans-serif" font-weight="bold" font-size="18.200" fill="#4a4a4a" stroke="#4a4a4a" stroke-width="0.500">AI</text></svg>
  <div class="fb" style="left:-0.200px;top:27.600px;width:1.500px;height:466px;background:#a6a6a6"></div><div class="fb" style="left:847px;top:27.600px;width:1px;height:466px"></div><div class="fb" style="left:0;top:493px;width:848px;height:1px"></div>
</div>
</body>
</html>
